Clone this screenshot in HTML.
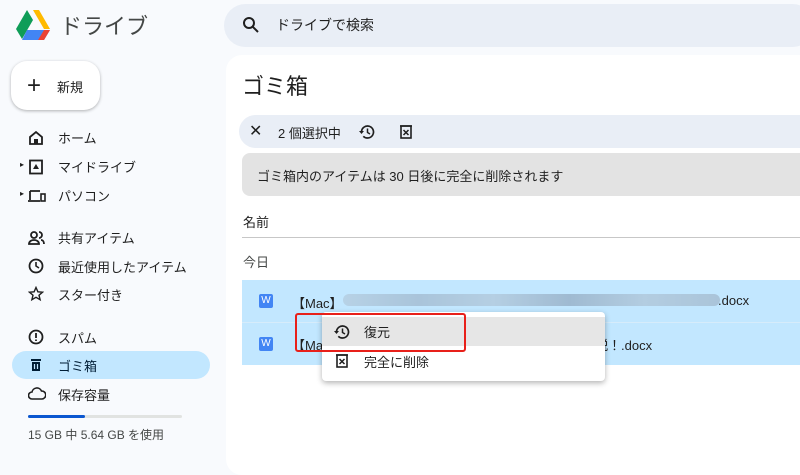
<!DOCTYPE html>
<html><head><meta charset="utf-8"><style>
*{margin:0;padding:0;box-sizing:border-box}
body{width:800px;height:452px;overflow:hidden;background:#f8fafd;font-family:"Liberation Sans","Noto Sans CJK JP",sans-serif;color:#1f1f1f;position:relative}
.a{position:absolute}
.nav{position:absolute;left:58px;font-size:13px;color:#1f1f1f}
.ic{position:absolute;left:28px}
</style></head><body>
<svg class="a" style="left:16px;top:10px" width="34" height="30" viewBox="0 0 34 30">
<polygon points="11,0 23,0 34,19 28,19 17,0" fill="#ffba00"/>
<polygon points="11,0 17,10 6,29 0,19" fill="#0f9d58"/>
<polygon points="11,20 34,20 28,30 6,30" fill="#4285f4"/>
<polygon points="28,20 34,20 28,30 22,30" fill="#ea4335"/>
</svg>
<div class="a" style="left:60px;top:9px;font-size:22px;color:#444746">ドライブ</div>
<div class="a" style="left:224px;top:4px;width:590px;height:43px;border-radius:22px;background:#e9eef6"></div>
<svg class="a" style="left:242px;top:16px" width="18" height="18" viewBox="0 0 18 18"><circle cx="7" cy="7" r="5" fill="none" stroke="#1f1f1f" stroke-width="2"/><line x1="11" y1="11" x2="16" y2="16" stroke="#1f1f1f" stroke-width="2"/></svg>
<div class="a" style="left:276px;top:15px;font-size:14px;color:#1f1f1f">ドライブで検索</div>
<div class="a" style="left:11px;top:61px;width:89px;height:49px;border-radius:16px;background:#fff;box-shadow:0 1px 3px rgba(0,0,0,.3)"></div>
<div class="a" style="left:27px;top:72px;font-size:24px;font-weight:300">+</div>
<div class="a" style="left:57px;top:77px;font-size:13px">新規</div>
<svg class="ic" style="top:130px" width="16" height="16" viewBox="0 0 16 16"><path d="M2 7 8 2l6 5v7H2z" fill="none" stroke="#1f1f1f" stroke-width="1.8"/><rect x="6" y="9" width="4" height="5" fill="#1f1f1f"/></svg>
<div class="nav" style="top:128px">ホーム</div>
<div class="a" style="left:20px;top:160px;font-size:8px">▸</div>
<svg class="ic" style="top:159px" width="16" height="16" viewBox="0 0 16 16"><rect x="2" y="1.5" width="12" height="13" fill="none" stroke="#1f1f1f" stroke-width="1.8"/><path d="M5 10 8 5l3 5z" fill="#1f1f1f"/></svg>
<div class="nav" style="top:157px">マイドライブ</div>
<div class="a" style="left:20px;top:189px;font-size:8px">▸</div>
<svg class="ic" style="top:188px" width="18" height="16" viewBox="0 0 18 16"><path d="M2 3h10M2 3v9M0 13h12" stroke="#1f1f1f" stroke-width="1.8" fill="none"/><rect x="13" y="6" width="4" height="7" fill="none" stroke="#1f1f1f" stroke-width="1.6"/></svg>
<div class="nav" style="top:186px">パソコン</div>
<svg class="ic" style="top:230px" width="18" height="16" viewBox="0 0 18 16"><circle cx="6" cy="5" r="3" fill="none" stroke="#1f1f1f" stroke-width="1.8"/><path d="M1 14c0-3 3-4 5-4s5 1 5 4z" fill="none" stroke="#1f1f1f" stroke-width="1.8"/><path d="M11 2a3 3 0 0 1 0 6M13 10c2 0 3 2 3 4" fill="none" stroke="#1f1f1f" stroke-width="1.8"/></svg>
<div class="nav" style="top:228px">共有アイテム</div>
<svg class="ic" style="top:258px" width="16" height="16" viewBox="0 0 16 16"><circle cx="8" cy="8" r="6.5" fill="none" stroke="#1f1f1f" stroke-width="1.8"/><path d="M8 4v4l3 2" fill="none" stroke="#1f1f1f" stroke-width="1.6"/></svg>
<div class="nav" style="top:257px">最近使用したアイテム</div>
<svg class="ic" style="top:286px" width="16" height="16" viewBox="0 0 16 16"><path d="M8 1.5l1.9 4.3 4.6.4-3.5 3 1.1 4.5L8 11.3l-4.1 2.4 1.1-4.5-3.5-3 4.6-.4z" fill="none" stroke="#1f1f1f" stroke-width="1.4"/></svg>
<div class="nav" style="top:285px">スター付き</div>
<svg class="ic" style="top:329px" width="16" height="16" viewBox="0 0 16 16"><circle cx="8" cy="8" r="6.5" fill="none" stroke="#1f1f1f" stroke-width="1.8"/><path d="M8 4v5M8 10.5v1.5" stroke="#1f1f1f" stroke-width="1.8"/></svg>
<div class="nav" style="top:328px">スパム</div>
<div class="a" style="left:12px;top:351px;width:198px;height:28px;border-radius:14px;background:#c2e7ff"></div>
<svg class="ic" style="top:357px" width="16" height="16" viewBox="0 0 16 16"><rect x="3" y="2" width="10" height="2" fill="#001d35"/><path d="M4 5h8v9H4z" fill="#001d35"/><path d="M6.5 7v5M9.5 7v5" stroke="#c2e7ff" stroke-width="1.2"/></svg>
<div class="nav" style="top:356px;color:#001d35">ゴミ箱</div>
<svg class="ic" style="top:386px" width="18" height="14" viewBox="0 0 18 14"><path d="M4 13a3.5 3.5 0 0 1 0-7 5 5 0 0 1 9.5-1A4 4 0 0 1 14 13z" fill="none" stroke="#1f1f1f" stroke-width="1.6"/></svg>
<div class="nav" style="top:385px">保存容量</div>
<div class="a" style="left:28px;top:415px;width:154px;height:3px;background:#e1e3e1;border-radius:2px"></div>
<div class="a" style="left:28px;top:415px;width:57px;height:3px;background:#0b57d0;border-radius:2px"></div>
<div class="a" style="left:28px;top:426px;font-size:12px;color:#444746">15 GB 中 5.64 GB を使用</div>

<div class="a" style="left:226px;top:55px;width:600px;height:420px;background:#fff;border-radius:16px"></div>
<div class="a" style="left:242px;top:69px;font-size:22px;color:#1f1f1f">ゴミ箱</div>
<div class="a" style="left:239px;top:115px;width:580px;height:33px;border-radius:17px;background:#e9eef6"></div>
<div class="a" style="left:249px;top:121px;font-size:16px">✕</div>
<div class="a" style="left:278px;top:123px;font-size:13px">2 個選択中</div>
<svg class="a" style="left:359px;top:124px" width="16" height="16" viewBox="0 0 16 16"><path d="M2.5 8a6 6 0 1 1 1.8 4.3" fill="none" stroke="#1f1f1f" stroke-width="1.7"/><path d="M0 7h5L2.5 10z" fill="#1f1f1f"/><path d="M8.5 4.5v4l2.5 1.5" fill="none" stroke="#1f1f1f" stroke-width="1.5"/></svg>
<svg class="a" style="left:399px;top:124px" width="14" height="16" viewBox="0 0 14 16"><rect x="2" y="2" width="10" height="12" fill="none" stroke="#1f1f1f" stroke-width="1.6"/><path d="M1 2h12M4.5 6l5 5M9.5 6l-5 5" stroke="#1f1f1f" stroke-width="1.5"/></svg>
<div class="a" style="left:242px;top:153px;width:580px;height:43px;border-radius:8px;background:#e3e3e3"></div>
<div class="a" style="left:257px;top:166px;font-size:13px">ゴミ箱内のアイテムは 30 日後に完全に削除されます</div>
<div class="a" style="left:243px;top:212px;font-size:13px">名前</div>
<div class="a" style="left:242px;top:237px;width:560px;height:1px;background:#c7c7c7"></div>
<div class="a" style="left:243px;top:252px;font-size:13px;color:#444746">今日</div>
<div class="a" style="left:242px;top:280px;width:560px;height:85px;background:#c2e7ff"></div>
<div class="a" style="left:242px;top:322px;width:560px;height:1px;background:#d6ecfb"></div>
<div class="a" style="left:259px;top:294px;width:14px;height:14px;background:#4285f4;border-radius:2px;color:#fff;font-size:10px;text-align:center;line-height:14px">W</div>
<div class="a" style="left:259px;top:337px;width:14px;height:14px;background:#4285f4;border-radius:2px;color:#fff;font-size:10px;text-align:center;line-height:14px">W</div>
<div class="a" style="left:292px;top:293px;font-size:13px">【Mac】</div>
<div class="a" style="left:343px;top:294px;width:377px;height:12px;border-radius:6px;background:linear-gradient(90deg,#b7d2e6,#a9c4da 20%,#b5cfe3 40%,#9fbad1 60%,#b3cde1 80%,#aac4d9)"></div>
<div class="a" style="left:718px;top:293px;font-size:13px">.docx</div>
<div class="a" style="left:292px;top:335px;font-size:13px">【Ma</div>
<div class="a" style="left:595px;top:335px;font-size:13px">説！.docx</div>
<div class="a" style="left:322px;top:312px;width:283px;height:69px;background:#fff;border-radius:4px;box-shadow:0 2px 6px rgba(0,0,0,.3)"></div>
<div class="a" style="left:322px;top:317px;width:283px;height:29px;background:#e6e6e6"></div>
<svg class="a" style="left:334px;top:324px" width="16" height="16" viewBox="0 0 16 16"><path d="M2.5 8a6 6 0 1 1 1.8 4.3" fill="none" stroke="#1f1f1f" stroke-width="1.7"/><path d="M0 7h5L2.5 10z" fill="#1f1f1f"/><path d="M8.5 4.5v4l2.5 1.5" fill="none" stroke="#1f1f1f" stroke-width="1.5"/></svg>
<div class="a" style="left:364px;top:322px;font-size:13px">復元</div>
<svg class="a" style="left:335px;top:353px" width="14" height="16" viewBox="0 0 14 16"><rect x="2" y="2" width="10" height="12" fill="none" stroke="#1f1f1f" stroke-width="1.6"/><path d="M1 2h12M4.5 6l5 5M9.5 6l-5 5" stroke="#1f1f1f" stroke-width="1.5"/></svg>
<div class="a" style="left:364px;top:352px;font-size:13px">完全に削除</div>
<div class="a" style="left:295px;top:313px;width:171px;height:39px;border:2px solid #e8201a;border-radius:3px"></div>
</body></html>
